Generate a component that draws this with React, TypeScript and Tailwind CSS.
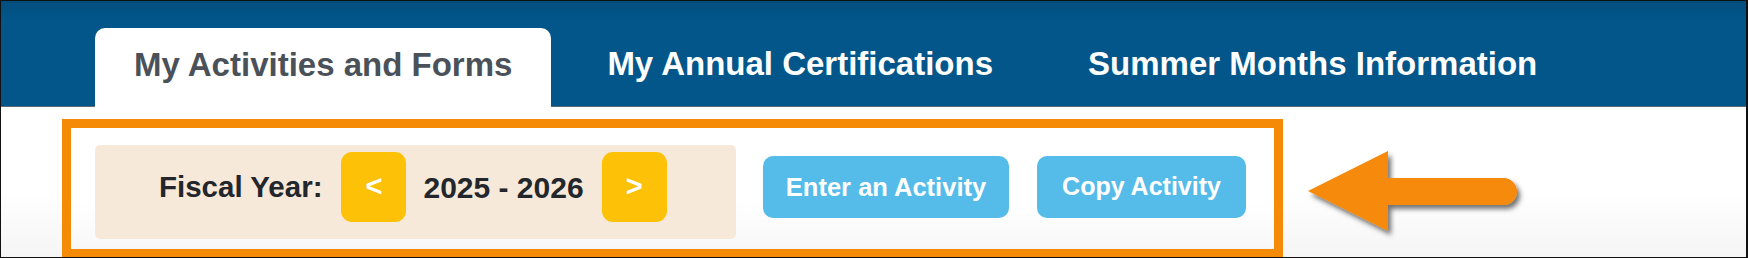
import React from "react";

const font = { fontFamily: '"Liberation Sans", Arial, Helvetica, sans-serif' };

function Tab({ label, active }: { label: string; active?: boolean }) {
  return (
    <div
      className={
        active
          ? "bg-white text-[#4a5159] rounded-t-[10px] -mb-px px-[39px] pt-[18px] pb-[24px] text-[33px] leading-[37px] font-bold whitespace-nowrap"
          : "text-white px-[39px] pt-[18px] pb-[24px] text-[33px] leading-[37px] font-bold whitespace-nowrap"
      }
    >
      {label}
    </div>
  );
}

export default function App() {
  return (
    <div
      className="relative w-[1748px] h-[258px] box-border overflow-hidden border-t border-l border-r-2 border-b border-[#111] bg-white"
      style={font}
    >
      <div className="h-[106px] box-border border-b border-[#566a78] bg-[linear-gradient(to_bottom,#024e7e_0px,#02568a_18px,#02568a_100%)] flex items-end pl-[94px] gap-[17px]">
        <Tab label="My Activities and Forms" active />
        <Tab label="My Annual Certifications" />
        <Tab label="Summer Months Information" />
      </div>

      <div className="h-[151px] bg-[linear-gradient(to_bottom,#ffffff_55%,#f5f5f5_100%)] pt-[12px] pl-[61px]">
        <div className="inline-flex items-start border-[9px] border-[#f58a07] bg-[linear-gradient(to_bottom,#ffffff_60%,#f8f8f8_100%)] pt-[17px] pl-[24px] pr-[28px] pb-[10px] gap-[27px]">
          <div className="w-[641px] h-[94px] box-border bg-[#f7e9d9] rounded-[5px] flex items-start pl-[64px] pt-[7px]">
            <div className="h-[70px] flex items-center text-[29.5px] font-bold text-[#23262a] whitespace-nowrap">
              Fiscal Year:
            </div>
            <div className="ml-[19px] w-[65px] h-[70px] rounded-[11px] bg-[#fdc108] flex items-center justify-center text-white text-[29px] font-bold">
              &lt;
            </div>
            <div className="ml-[17px] h-[70px] flex items-center text-[30px] font-bold text-[#23262a] whitespace-nowrap">
              2025 - 2026
            </div>
            <div className="ml-[18px] w-[65px] h-[70px] rounded-[11px] bg-[#fdc108] flex items-center justify-center text-white text-[29px] font-bold">
              &gt;
            </div>
          </div>
          <div className="flex gap-[28px] mt-[11px]">
            <div className="h-[62px] w-[246px] justify-center rounded-[10px] bg-[#55bce9] flex items-center text-white text-[25.5px] font-bold whitespace-nowrap">
              Enter an Activity
            </div>
            <div className="h-[62px] w-[209px] justify-center rounded-[10px] bg-[#55bce9] flex items-center text-white text-[25px] font-bold whitespace-nowrap">
              Copy Activity
            </div>
          </div>
        </div>
      </div>

      <svg
        className="absolute left-[1300px] top-[140px]"
        width="235"
        height="105"
        viewBox="0 0 235 105"
      >
        <defs>
          <filter id="sh" x="-10%" y="-20%" width="130%" height="150%">
            <feDropShadow dx="3" dy="4" stdDeviation="2.5" floodColor="#000" floodOpacity="0.55" />
          </filter>
        </defs>
        <path
          d="M7 50 L87 10 L87 37 L202.5 37 A13.5 13.5 0 0 1 202.5 64 L87 64 L87 90 Z"
          fill="#f58a0a"
          filter="url(#sh)"
        />
      </svg>
    </div>
  );
}
